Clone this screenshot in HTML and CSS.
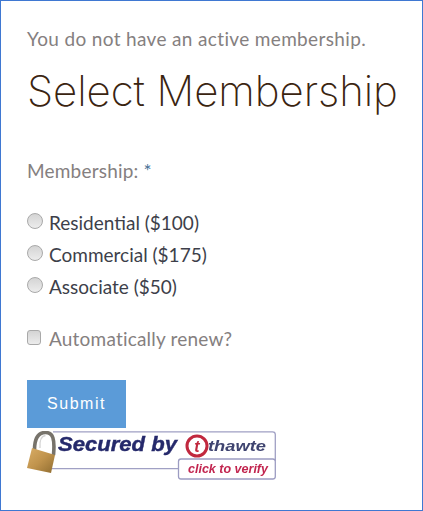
FILE: index.html
```html
<!DOCTYPE html>
<html lang="en">
<head>
<meta charset="utf-8">
<title>Select Membership</title>
<link rel="stylesheet" href="styles.css">
</head>
<body>
<main class="frame">
  <p class="notice">You do not have an active membership.</p>
  <h1 class="title">Select Membership</h1>
  <form class="form">
    <div class="field-label">Membership: <span class="req">*</span></div>
    <div class="options">
      <label class="option"><input class="radio" type="radio" name="m"><span>Residential ($100)</span></label>
      <label class="option"><input class="radio" type="radio" name="m"><span>Commercial ($175)</span></label>
      <label class="option"><input class="radio" type="radio" name="m"><span>Associate ($50)</span></label>
    </div>
    <label class="renew"><input class="check" type="checkbox"><span>Automatically renew?</span></label>
    <button class="submit" type="button">Submit</button>
  </form>
  <svg class="seal" width="250" height="50" viewBox="0 0 250 50" xmlns="http://www.w3.org/2000/svg">
    <defs>
      <linearGradient id="gold" x1="0" y1="0" x2="1" y2="1">
        <stop offset="0" stop-color="#d9ad66"/><stop offset="0.5" stop-color="#c0934c"/><stop offset="1" stop-color="#8f6c30"/>
      </linearGradient>
    </defs>
    <path d="M26 0.800H245.500Q248.300 0.800 248.300 3.500V30" fill="none" stroke="#a0a0c4" stroke-width="1.300"/>
    <path d="M24 37.700H152" fill="none" stroke="#a0a0c4" stroke-width="1.300"/>
    <rect x="151.500" y="28" width="96.800" height="20" rx="2.500" fill="#fff" stroke="#9c9cc2" stroke-width="1.300"/>
    <path d="M7.500 19C7.500 9 10 1.500 18.500 1.500C26 1.500 28 8 26.500 24" fill="none" stroke="#77736b" stroke-width="3.600"/>
    <path d="M13 17C12.500 10 14 5 18.500 4.500" fill="none" stroke="#d6d6d6" stroke-width="1.400"/>
    <path d="M5 17L28 24L24 42L0 37Z" fill="url(#gold)"/>
    <text class="seal-secured" x="31" y="19.500" textLength="119" lengthAdjust="spacingAndGlyphs">Secured by</text>
    <circle cx="170" cy="15" r="10" fill="#fff" stroke="#c1283e" stroke-width="3"/>
    <text class="seal-t" x="170" y="20.500">t</text>
    <text class="seal-thawte" x="181" y="20" textLength="58" lengthAdjust="spacingAndGlyphs">thawte</text>
    <text class="seal-click" x="161" y="41.500" textLength="80" lengthAdjust="spacingAndGlyphs">click to verify</text>
  </svg>
</main>
</body>
</html>
```
FILE: styles.css
```css
* { box-sizing: border-box; }
html, body { margin: 0; padding: 0; }
body { background: #fff; font-family: "Lato", "Liberation Sans", sans-serif; }
.frame {
  width: 423px;
  height: 511px;
  border: 1px solid #3f78d2;
  border-left-width: 1.5px;
  padding: 26px 26px 0;
  overflow: hidden;
}
.notice {
  margin: 0;
  font-size: 19px;
  letter-spacing: 0.35px;
  line-height: 24px;
  color: #85807f;
}
.title {
  margin: 13px 0 0;
  font-family: "Inter", "Lato", sans-serif;
  font-size: 42px;
  line-height: 54px;
  font-weight: 200;
  letter-spacing: -0.06px;
  color: #3a2410;
  white-space: nowrap;
}
.form { display: block; margin-top: 0; }
.field-label {
  margin-top: 41px;
  font-size: 19px;
  letter-spacing: 0.2px;
  line-height: 24px;
  color: #85807f;
}
.req { color: #4a6f95; }
.options {
  margin-top: 28px;
  display: flex;
  flex-direction: column;
  gap: 8px;
}
.option, .renew {
  display: flex;
  align-items: center;
  font-size: 19px;
  line-height: 24px;
}
.option span { color: #3d3f4a; }
.renew { margin-top: 28px; color: #85807f; letter-spacing: 0.2px; }
.radio, .check {
  margin: 0 6px 0 0;
  width: 16px;
  height: 16px;
  appearance: none;
  background: linear-gradient(#d4d4d4, #ececec);
  border: 1px solid #a9a9a9;
  flex: none;
  position: relative;
  top: -2px;
}
.radio { border-radius: 50%; }
.check { border-radius: 3px; width: 14px; height: 15px; margin-right: 8px; }
.submit {
  display: block;
  margin-top: 29px;
  width: 99px;
  height: 48px;
  border: 0;
  background: #5b9bd8;
  color: #fff;
  font-family: "Liberation Sans", sans-serif;
  font-size: 16px;
  letter-spacing: 1.5px;
  padding: 0;
}
.seal { display: block; margin-top: 3px; filter: blur(0.3px); }
.seal text { font-family: "Liberation Sans", sans-serif; font-weight: 700; font-style: italic; }
.seal-secured { font-size: 20px; fill: #25296b; stroke: #25296b; stroke-width: 0.4px; }
.seal-t { font-size: 16px; fill: #c1283e; text-anchor: middle; }
.seal-thawte { font-size: 15px; fill: #3f4470; }
.seal-click { font-size: 12px; fill: #c2254f; }
```
